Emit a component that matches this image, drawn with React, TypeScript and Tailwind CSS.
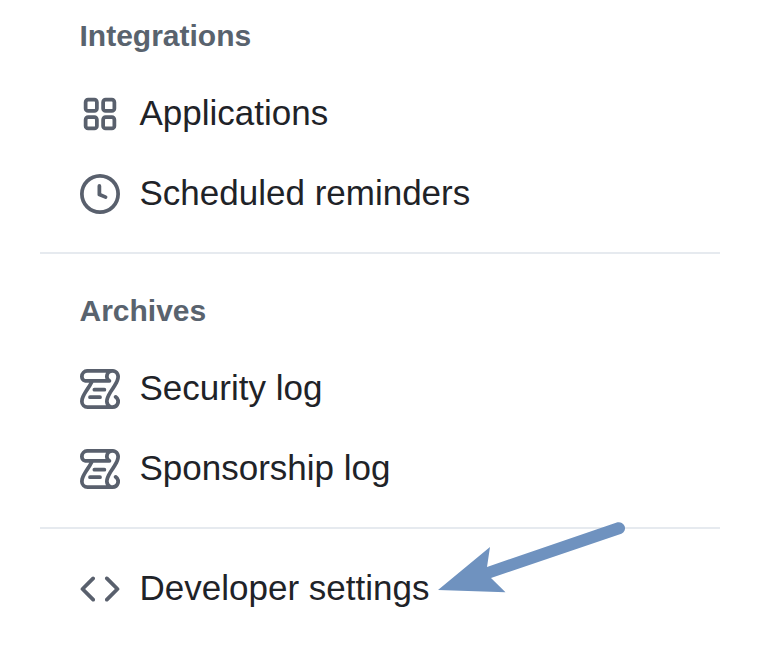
import type { ReactNode } from "react";

const ICONS = {
  apps: "M1.5 3.25c0-.966.784-1.75 1.75-1.75h2.5c.966 0 1.75.784 1.75 1.75v2.5A1.75 1.75 0 0 1 5.75 7.5h-2.5A1.75 1.75 0 0 1 1.5 5.75Zm7 0c0-.966.784-1.75 1.75-1.75h2.5c.966 0 1.75.784 1.75 1.75v2.5a1.75 1.75 0 0 1-1.75 1.75h-2.5A1.75 1.75 0 0 1 8.5 5.75Zm-7 7c0-.966.784-1.75 1.75-1.75h2.5c.966 0 1.75.784 1.75 1.75v2.5a1.75 1.75 0 0 1-1.75 1.75h-2.5a1.75 1.75 0 0 1-1.75-1.75Zm7 0c0-.966.784-1.75 1.75-1.75h2.5c.966 0 1.75.784 1.75 1.75v2.5a1.75 1.75 0 0 1-1.75 1.75h-2.5a1.75 1.75 0 0 1-1.75-1.75ZM3.25 3a.25.25 0 0 0-.25.25v2.5c0 .138.112.25.25.25h2.5A.25.25 0 0 0 6 5.75v-2.5A.25.25 0 0 0 5.75 3Zm7 0a.25.25 0 0 0-.25.25v2.5c0 .138.112.25.25.25h2.5a.25.25 0 0 0 .25-.25v-2.5a.25.25 0 0 0-.25-.25Zm-7 7a.25.25 0 0 0-.25.25v2.5c0 .138.112.25.25.25h2.5a.25.25 0 0 0 .25-.25v-2.5a.25.25 0 0 0-.25-.25Zm7 0a.25.25 0 0 0-.25.25v2.5c0 .138.112.25.25.25h2.5a.25.25 0 0 0 .25-.25v-2.5a.25.25 0 0 0-.25-.25Z",
  clock: "M8 0a8 8 0 1 1 0 16A8 8 0 0 1 8 0ZM1.5 8a6.5 6.5 0 1 0 13 0 6.5 6.5 0 0 0-13 0Zm7-3.25v2.992l2.028.812a.75.75 0 0 1-.557 1.392l-2.5-1A.751.751 0 0 1 7 8.25v-3.5a.75.75 0 0 1 1.5 0Z",
  log: "M5 8.25a.75.75 0 0 1 .75-.75h4a.75.75 0 0 1 0 1.5h-4A.75.75 0 0 1 5 8.25ZM4 10.5A.75.75 0 0 0 4 12h4a.75.75 0 0 0 0-1.5H4ZM13-.005c1.654 0 3 1.328 3 3 0 .982-.338 1.933-.783 2.818-.443.879-1.028 1.758-1.582 2.588l-.011.017c-.568.853-1.104 1.659-1.501 2.446-.398.789-.623 1.494-.623 2.136a1.5 1.5 0 1 0 2.333-1.248.75.75 0 0 1 .834-1.246A3 3 0 0 1 13 16H3a3 3 0 0 1-3-3c0-1.582.891-3.135 1.777-4.506.209-.322.418-.637.623-.946.473-.709.923-1.386 1.287-2.048H2.51c-.576 0-1.381-.133-1.907-.783A2.68 2.68 0 0 1 0 2.995a3 3 0 0 1 3-3Zm0 1.5a1.5 1.5 0 0 0-1.5 1.5c0 .476.223.834.667 1.132A.75.75 0 0 1 11.75 5.5H5.368c-.467 1.003-1.141 2.015-1.773 2.963-.192.289-.381.571-.558.845C2.13 10.711 1.5 11.916 1.5 13A1.5 1.5 0 0 0 3 14.5h7.401A2.989 2.989 0 0 1 10 13c0-.979.338-1.928.784-2.812.441-.874 1.023-1.748 1.575-2.576l.017-.026c.568-.853 1.103-1.658 1.501-2.448.398-.79.623-1.497.623-2.143 0-.838-.669-1.5-1.5-1.5Zm-10 0a1.5 1.5 0 0 0-1.5 1.5c0 .321.1.569.27.778.097.12.325.227.74.227h7.674A2.737 2.737 0 0 1 10 2.995c0-.546.146-1.059.401-1.5Z",
  code: "m11.28 3.22 4.25 4.25a.75.75 0 0 1 0 1.06l-4.25 4.25a.749.749 0 0 1-1.275-.326.749.749 0 0 1 .215-.734L13.94 8l-3.72-3.72a.749.749 0 0 1 .326-1.275.749.749 0 0 1 .734.215Zm-6.56 0a.751.751 0 0 1 1.042.018.751.751 0 0 1 .018 1.042L2.06 8l3.72 3.72a.749.749 0 0 1-.326 1.275.749.749 0 0 1-.734-.215L.47 8.53a.75.75 0 0 1 0-1.06Z",
};

function Item({ icon, children }: { icon: keyof typeof ICONS; children: ReactNode }) {
  return (
    <li className="flex h-20 items-center gap-[19.5px]">
      <svg className="size-10 shrink-0 fill-[#59606d]" viewBox="0 0 16 16" aria-hidden="true">
        <path d={ICONS[icon]} />
      </svg>
      <span className="pb-[2px] text-[35px] leading-[50px] whitespace-nowrap">{children}</span>
    </li>
  );
}

function Heading({ children }: { children: ReactNode }) {
  return <h3 className="mb-4 -ml-[0.5px] text-[30px] leading-[45px] font-bold text-[#59636e]">{children}</h3>;
}

function Arrow() {
  return (
    <svg className="absolute top-[510px] left-[430px]" width="210" height="95" viewBox="430 510 210 95" fill="#6f92bf">
      <path d="M438 590 490 547 487 567 617.5 522.3A6.1 6.1 0 0 1 621.4 533.8L491 578 505.5 592.3Z" />
    </svg>
  );
}

export default function App() {
  return (
    <div className="relative h-[650px] w-[767px] overflow-hidden bg-white pt-[13px] text-[#1f2328] [font-family:'Liberation_Sans',Arial,sans-serif]">
      <nav className="ml-10 w-[680px]">
        <section className="h-[239px] px-10">
          <Heading>Integrations</Heading>
          <ul>
            <Item icon="apps">Applications</Item>
            <Item icon="clock">Scheduled reminders</Item>
          </ul>
        </section>
        <section className="h-[275px] border-t-2 border-[#e6eaef] px-10 pt-[34px]">
          <Heading>Archives</Heading>
          <ul>
            <Item icon="log">Security log</Item>
            <Item icon="log">Sponsorship log</Item>
          </ul>
        </section>
        <section className="border-t-2 border-[#e6eaef] px-10 pt-5">
          <ul>
            <Item icon="code">Developer settings</Item>
          </ul>
        </section>
      </nav>
      <Arrow />
    </div>
  );
}
